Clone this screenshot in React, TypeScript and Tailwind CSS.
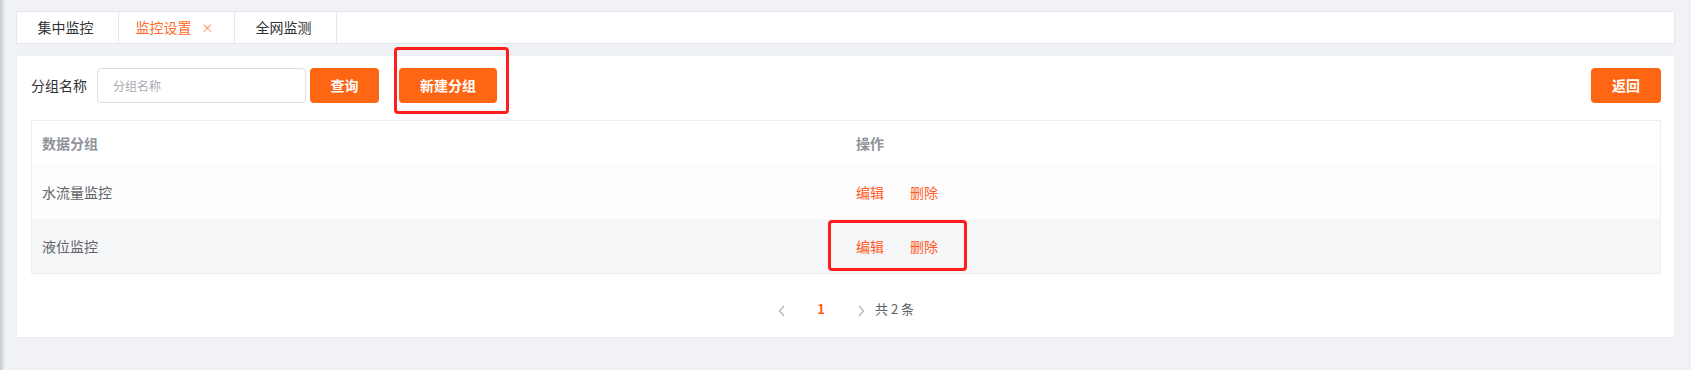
import React from 'react';

const orange = 'bg-[#ff6614]';

const tabs = [
  { label: '集中监控', active: false, w: 'w-[102px]' },
  { label: '监控设置', active: true, w: 'w-[116px]' },
  { label: '全网监测', active: false, w: 'w-[102px]' },
];

const rows = ['水流量监控', '液位监控'];

export default function App() {
  return (
    <div
      className="flex h-[370px] w-[1691px] bg-[#f0f2f5] text-[14px] text-[#606266]"
      style={{ fontFamily: '"Noto Sans CJK SC", "Noto Sans", sans-serif' }}
    >
      <div className="w-[5px] shrink-0 bg-gradient-to-r from-[#c5c9cf] to-[#eceef2]" />
      <div className="flex-1 pl-[11px] pr-[16px] pt-[11px]">
        {/* tabs */}
        <div className="flex h-[33px] rounded-t-[2px] border border-[#e4e7ed] bg-white">
          {tabs.map((t) => (
            <div
              key={t.label}
              className={`${t.w} flex items-center justify-center gap-[10px] border-r border-[#e4e7ed] pr-[4px] ${
                t.active ? 'text-[#ff6a2a]' : 'text-[#303133]'
              }`}
            >
              <span>{t.label}</span>
              {t.active && <span className="text-[12px] text-[#ff8a60]">×</span>}
            </div>
          ))}
        </div>

        {/* card */}
        <div className="mt-[11px] h-[283px] border border-[#ebeef5] bg-white pl-[14px] pr-[13px] pt-[12px]">
          <div className="flex h-[35px] items-center">
            <span className="text-[#303133]">分组名称</span>
            <input
              placeholder="分组名称"
              className="ml-[10px] h-[35px] w-[209px] rounded-[4px] border border-[#dcdfe6] pl-[15px] text-[12px] outline-none placeholder:text-[#a8abb2]"
            />
            <button className={`ml-[4px] h-[35px] w-[69px] rounded-[4px] ${orange} font-semibold text-white`}>
              查询
            </button>
            <div className="relative ml-[20px]">
              <button className={`h-[35px] w-[98px] rounded-[4px] ${orange} font-semibold text-white`}>
                新建分组
              </button>
              <div className="pointer-events-none absolute left-[-5px] top-[-21px] h-[67px] w-[115px] rounded-[4px] border-[3px] border-[#ff1d1d]" />
            </div>
            <div className="flex-1" />
            <button className={`h-[35px] w-[70px] rounded-[4px] ${orange} font-semibold text-white`}>
              返回
            </button>
          </div>

          {/* table */}
          <div className="mt-[17px] border border-[#ebeef5]">
            <div className="grid h-[44px] grid-cols-2 items-center font-semibold text-[#909399]">
              <div className="pl-[10px]">数据分组</div>
              <div className="pl-[10px]">操作</div>
            </div>
            {rows.map((r, i) => (
              <div
                key={r}
                className={`grid h-[54px] grid-cols-2 items-center ${i % 2 === 1 ? 'bg-[#f5f6f8]' : 'bg-[#fdfdfd]'}`}
              >
                <div className="pl-[10px]">{r}</div>
                <div className="relative flex items-center gap-[26px] pl-[10px] text-[#ff5a26]">
                  <span>编辑</span>
                  <span>删除</span>
                  {i === 1 && (
                    <div className="pointer-events-none absolute left-[-18px] top-[-16px] h-[51px] w-[139px] rounded-[4px] border-[3px] border-[#ff1d1d]" />
                  )}
                </div>
              </div>
            ))}
          </div>

          {/* pagination */}
          <div className="mt-[22px] flex h-[26px] items-center justify-center pr-[6px] text-[13px]">
            <span className="w-[20px] text-center">
              <svg width="8" height="12" viewBox="0 0 8 12" className="inline">
                <path d="M6 1 L1.5 6 L6 11" fill="none" stroke="#b4b8c0" strokeWidth="1.4" />
              </svg>
            </span>
            <span className="ml-[16px] w-[26px] text-center font-semibold text-[#ff5a1f]">1</span>
            <span className="ml-[17px] w-[20px] text-center">
              <svg width="8" height="12" viewBox="0 0 8 12" className="inline">
                <path d="M2 1 L6.5 6 L2 11" fill="none" stroke="#b4b8c0" strokeWidth="1.4" />
              </svg>
            </span>
            <span className="ml-[4px] text-[#606266]">共 2 条</span>
          </div>
        </div>
      </div>
    </div>
  );
}
